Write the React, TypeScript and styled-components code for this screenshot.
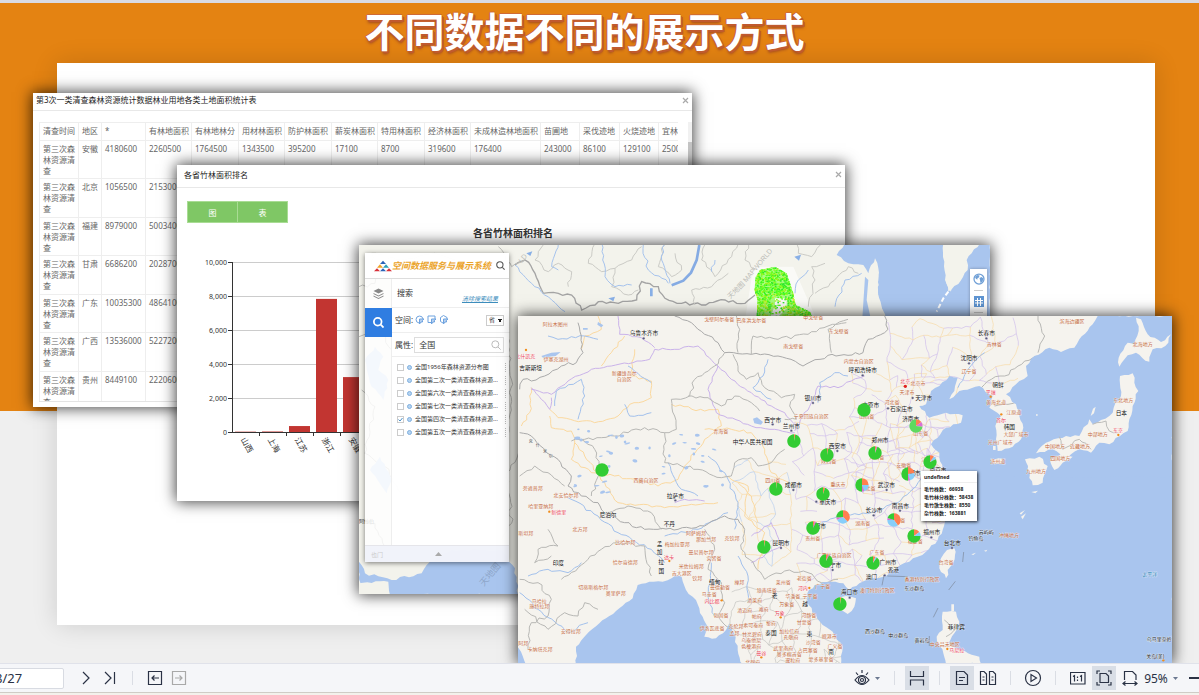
import React from 'react';
import styled, { createGlobalStyle } from 'styled-components';

const GlobalStyle = createGlobalStyle`
  * { box-sizing: border-box; }
  html, body { margin: 0; height: 100%; overflow: hidden; }
  body { font-family: "Noto Sans", "Noto Sans CJK SC", sans-serif; color: #333; }
  #root { height: 100%; }
  button, input, select { font: inherit; color: inherit; margin: 0; }
`;

/* ---------- geometry helpers ---------- */

type Pt = [number, number];

const random = (seed: number) => () => {
  seed = (seed * 1664525 + 1013904223) % 4294967296;
  return seed / 4294967296;
};

/* A jagged line through the given points, for coasts, borders and roads. */
const rough = (pts: Pt[], amp: number, seed: number, closed = false) => {
  const r = random(seed);
  const all = closed ? [...pts, pts[0]] : pts;
  let d = `M${all[0][0]} ${all[0][1]}`;
  for (let i = 1; i < all.length; i++) {
    const [x0, y0] = all[i - 1];
    const [x1, y1] = all[i];
    const len = Math.hypot(x1 - x0, y1 - y0);
    const n = Math.max(1, Math.round(len / 13));
    for (let k = 1; k < n; k++) {
      const t = k / n;
      const off = (r() - 0.5) * 2 * amp;
      const px = x0 + (x1 - x0) * t - ((y1 - y0) / len) * off;
      const py = y0 + (y1 - y0) * t + ((x1 - x0) / len) * off;
      d += `L${px.toFixed(0)} ${py.toFixed(0)}`;
    }
    d += `L${x1} ${y1}`;
  }
  return closed ? d + 'Z' : d;
};

const parse = (s: string): Pt[] => s.split(' ').map(p => p.split(',').map(Number) as Pt);

const mesh = (x0: number, y0: number, x1: number, y1: number, step: number, seed: number) => {
  const r = random(seed);
  const rows: Pt[][] = [];
  for (let y = y0; y <= y1; y += step) {
    const row: Pt[] = [];
    for (let x = x0; x <= x1; x += step) {
      row.push([Math.round(x + (r() - 0.5) * step), Math.round(y + (r() - 0.5) * step)]);
    }
    rows.push(row);
  }
  const out: string[] = [];
  rows.forEach((row, j) =>
    row.forEach((p, i) => {
      if (row[i + 1] && r() > 0.2) out.push(rough([p, row[i + 1]], 3, seed + i * 7 + j));
      if (rows[j + 1] && r() > 0.2) out.push(rough([p, rows[j + 1][i]], 3, seed + i + j * 11));
    })
  );
  return out;
};

/* ---------- slide ---------- */

const Viewer = styled.div`
  display: flex;
  flex-direction: column;
  height: 100vh;
  background: #efefef;
`;

const Slide = styled.main`
  position: relative;
  flex: 1;
  min-height: 0;
  overflow: hidden;
  border-top: 3px solid #d9dbe3;
  background: linear-gradient(#e48312 408px, #efefef 408px);
`;

const SlideTitle = styled.h1`
  margin: 0;
  height: 60px;
  padding-right: 30px;
  text-align: center;
  font-size: 40px;
  line-height: 58px;
  font-weight: 700;
  color: #fff;
  text-shadow: 1px 1px 0 #c05a2e, 2px 2px 0 #c05a2e, -1px 0 0 #c05a2e, 0 -1px 0 #cf6a35, 1px 3px 3px #a04a20;
`;

const Sheet = styled.div`
  height: 562px;
  margin: 0 44px 0 57px;
  background: #fff;
  box-shadow: 0 0 24px rgba(0, 0, 0, 0.14);
`;

const Win = styled.section<{ $x: number; $y: number; $w: number; $h: number }>`
  position: absolute;
  left: ${p => p.$x}px;
  top: ${p => p.$y}px;
  width: ${p => p.$w}px;
  height: ${p => p.$h}px;
  background: #fff;
  box-shadow: 0 0 14px 1px rgba(0, 0, 0, 0.75);
`;

const WinBar = styled.header<{ $h: number; $pad: number }>`
  display: flex;
  align-items: center;
  justify-content: space-between;
  height: ${p => p.$h}px;
  padding: 0 3px 3px ${p => p.$pad}px;
  border-bottom: 1px solid #e8e8e8;
`;

const WinTitle = styled.h2`
  margin: 0;
  font-size: 8px;
  font-weight: 400;
  line-height: 12px;
  color: #222;
`;

const Close = styled.button`
  display: flex;
  padding: 0;
  border: 0;
  background: none;
  color: #aaa;
`;

const CloseButton = () => (
  <Close aria-label="关闭">
    <svg width="7" height="7" viewBox="0 0 7 7" stroke="currentColor" strokeWidth="1.2"><path d="M1 1l5 5M6 1l-5 5" /></svg>
  </Close>
);

/* ---------- table window ---------- */

const TableBody = styled.div`
  display: flex;
  justify-content: space-between;
  height: 291px;
  padding: 11px 0 0 6px;
`;

const TableClip = styled.div`
  width: 639px;
  height: 280px;
  overflow: hidden;
  border-bottom: 1px solid #e4e4e4;
`;

const ScrollTrack = styled.div`
  width: 4px;
  height: 100%;
  padding-top: 20px;
  background: #f1f1f1;
  &::after { content: ''; display: block; height: 90px; background: #c4c4c4; }
`;

const DataTable = styled.table`
  width: 665px;
  height: 288px;
  table-layout: fixed;
  border-collapse: collapse;
  font-size: 8px;
  line-height: 11px;
  color: #666;
  th, td {
    padding: 2px 3px;
    border: 1px solid #eee;
    text-align: left;
    vertical-align: top;
    font-weight: 400;
    overflow: hidden;
  }
  th { height: 18px; white-space: nowrap; }
`;

const columns: [string, number][] = [
  ['清查时间', 39], ['地区', 23], ['*', 44], ['有林地面积', 46], ['有林地林分', 47], ['用材林面积', 46],
  ['防护林面积', 47], ['薪炭林面积', 46], ['特用林面积', 47], ['经济林面积', 46], ['未成林造林地面积', 70],
  ['苗圃地', 39], ['采伐迹地', 40], ['火烧迹地', 39], ['宜林地', 46],
];

const rows: string[][] = [
  ['安徽', '4180600', '2260500', '1764500', '1343500', '395200', '17100', '8700', '319600', '176400', '243000', '86100', '129100', '250000'],
  ['北京', '1056500', '215300'],
  ['福建', '8979000', '5003400'],
  ['甘肃', '6686200', '2028700'],
  ['广东', '10035300', '4864100'],
  ['广西', '13536000', '5227200'],
  ['贵州', '8449100', '2220600'],
];

const TableWindow = () => (
  <Win $x={33} $y={90} $w={659} $h={314}>
    <WinBar $h={18} $pad={3}>
      <WinTitle>第3次一类清查森林资源统计数据林业用地各类土地面积统计表</WinTitle>
      <CloseButton />
    </WinBar>
    <TableBody>
      <TableClip>
        <DataTable>
          <colgroup>{columns.map(([n, w]) => <col key={n} width={w} />)}</colgroup>
          <thead><tr>{columns.map(([n]) => <th key={n} scope="col">{n}</th>)}</tr></thead>
          <tbody>
            {rows.map(r => (
              <tr key={r[0]}>
                <td>第三次森林资源清查</td>
                {columns.slice(1).map(([n], i) => <td key={n}>{r[i]}</td>)}
              </tr>
            ))}
          </tbody>
        </DataTable>
      </TableClip>
      <ScrollTrack />
    </TableBody>
  </Win>
);

/* ---------- chart window ---------- */

const ChartBody = styled.div`
  display: flex;
  flex-direction: column;
  padding: 13px 10px 0;
`;

const Tabs = styled.div`
  display: flex;
`;

const Tab = styled.button`
  width: 51px;
  height: 22px;
  padding: 0;
  border: 1px solid #a9dc94;
  background: #7fc765;
  color: #fff;
  font-size: 8px;
  & + & { margin-left: -1px; }
`;

const ChartTitle = styled.h3`
  margin: 0;
  padding: 2px 0 0 4px;
  text-align: center;
  font-size: 10px;
  line-height: 16px;
  font-weight: 700;
`;

const ChartSvg = styled.svg`
  display: block;
  width: 100%;
  height: 240px;
  font-size: 7px;
  fill: #333;
`;

const bars: [string, number][] = [['山西', 20], ['上海', 30], ['江苏', 350], ['浙江', 7830], ['安徽', 3230], ['福建', 2600]];

const ChartWindow = () => (
  <Win $x={177} $y={162} $w={668} $h={336}>
    <WinBar $h={23} $pad={7}>
      <WinTitle>各省竹林面积排名</WinTitle>
      <CloseButton />
    </WinBar>
    <ChartBody>
      <Tabs><Tab>图</Tab><Tab>表</Tab></Tabs>
      <ChartTitle>各省竹林面积排名</ChartTitle>
      <ChartSvg>
        {[0, 1, 2, 3, 4, 5].map(i => {
          const y = 191 - i * 34;
          return (
            <g key={i}>
              <path d={`M46 ${y}.5H620`} stroke={i ? '#ccc' : '#333'} />
              <path d={`M41 ${y}.5h5`} stroke="#333" />
              <text x="40" y={y + 3} textAnchor="end">{(i * 2000).toLocaleString('en-US')}</text>
            </g>
          );
        })}
        <path d="M45.500 21V192" stroke="#333" />
        {bars.map(([name, v], i) => (
          <g key={name}>
            <rect x={48 + i * 27} y={191 - v * 0.017} width="21" height={v * 0.017} fill="#c23531" />
            <path d={`M${72.5 + i * 27} 192v3`} stroke="#333" />
            <text transform={`translate(${56 + i * 27} 197) rotate(60)`} fontSize="8" y="3">{name}</text>
          </g>
        ))}
      </ChartSvg>
    </ChartBody>
  </Win>
);

/* ---------- forest map window ---------- */

const MapSvg = styled.svg`
  display: block;
  width: 100%;
  height: 100%;
`;

const forest = (() => {
  const r = random(42);
  const out: { x: number; y: number; c: string }[] = [];
  const colors = ['#4bff1a', '#2ee82a', '#9cf51c', '#66ff22', '#c4ef2a', '#3df53a'];
  for (let i = 0; i < 1500; i++) {
    const y = 78 + r() * 155;
    const x = 715 + r() * 180;
    const hole = y > 165 && x > 765 && x < 812 && r() > 0.3;
    if (!hole) out.push({ x: Math.round(x), y: Math.round(y), c: colors[Math.floor(r() * (y > 160 ? 5 : 4))] });
  }
  return out;
})();

const northBorders = [
  '0,75 30,60 60,100 85,160 130,160 170,165 200,210 250,185 310,190 365,180 380,125 430,140 450,175 500,190 560,195 630,180 690,190 720,165',
  '90,0 60,60 100,95 130,70 170,95 160,140', '240,0 220,70 260,95 300,85 350,60 380,20', '300,85 290,140 340,165 370,150',
  '570,0 560,60 600,110 650,50 670,10', '540,195 530,150 590,140 640,100', '450,0 430,80 470,110 500,90 480,40',
  '700,0 690,60 720,90', '840,0 850,40 890,50 920,0', '900,160 940,140 1000,80 1030,100', '880,200 900,120 890,80 930,70',
];
const northRivers = ['130,10 110,80 130,90', '260,10 270,110 300,140 350,135', '380,0 400,90 460,130', '0,75 50,130 110,180 150,215',
  '450,0 440,60 465,130', '600,60 590,95', '840,160 850,120 880,90', '960,200 990,120 1040,100'];

const ForestMap = () => (
  <MapSvg viewBox="0 0 1893 1047" preserveAspectRatio="xMinYMin slice">
    <defs>
      <clipPath id="forest"><path d="M735 90L780 80 815 100 825 130 835 160 842 195 885 215 892 232H725L728 180 718 150 722 110Z" /></clipPath>
    </defs>
    <rect width="1893" height="1047" fill="#f3f3ec" />
    <g transform="translate(468 -15)" fill="none">
      <path fill="#fff" d="M715 80h120l70 160H690Z" opacity=".6" />
      {northBorders.map((s, i) => <path key={s} d={rough(parse(s), 5, 12 + i)} stroke={i ? '#cbcbc6' : '#a4a4a4'} strokeWidth={i ? 3 : 4} />)}
      {northRivers.map((s, i) => <path key={s} d={rough(parse(s), 5, 80 + i)} stroke="#a6c3ec" strokeWidth="3" />)}
      <path d="M553 15L545 60 528 98 505 122 470 136" stroke="#85abe3" strokeWidth="8" />
      <path d={rough(parse('990,10 965,45 1000,70 1045,75 1060,100 1080,55 1090,85 1088,160 1100,200 1112,235 1300,235 1310,160 1290,120 1285,10'), 3, 5, true)} fill="#a9c5ee" />
      <path d={rough(parse('1285,0 1300,155 1350,95 1355,60 1395,15 1395,0'), 4, 6, true)} fill="#f3f3ec" />
      <path d={rough(parse('1395,10 1355,60 1358,90 1305,160 1255,235 1425,235 1425,10'), 3, 7, true)} fill="#a9c5ee" />
      <path d={rough(parse('1070,90 1088,85 1090,170 1110,232 1068,232'), 2, 8, true)} fill="#f3f3ec" />
      <path d="M1050 110l10 10-5 60 12 55h-25z" fill="#a9c5ee" />
      <path d="M1300 155l-15 20-20 40" stroke="#fff" strokeWidth="6" strokeDasharray="14 8" />
      <path d="M280 175l20-5-5 14zM405 145h8v24h-8zM838 50l20-6-6 18zM34 40l18-6-6 14z" fill="#88afe6" />
      <g clipPath="url(#forest)">
        <path fill="#7dff3d" opacity=".65" d="M715 75h120v100h-55v20l-15 40h-55zM815 175l80 40v20h-110l30-30z" />
        {forest.map((p, i) => <rect key={i} x={p.x} y={p.y} width="5" height="4" fill={p.c} />)}
      </g>
      <g fill="#bcbcb7" fontSize="21" fontFamily="Liberation Sans, Noto Sans CJK SC, sans-serif">
        <text transform="translate(694 128) rotate(-50)">MAPWORLD</text>
        <text transform="translate(646 178) rotate(-45)">天地图</text>
        <text transform="translate(20 70) rotate(-50)">LD</text>
      </g>
    </g>
    <g transform="translate(-12 -15)" fill="none">
      {['12,140 60,130 50,40 150,60 240,40 300,60', '12,290 80,280 110,330', '20,450 60,500 30,640 90,680 140,760', '430,20 470,80 510,60', '440,900 470,850 455,700 490,640', '12,840 60,850 90,920', '460,600 470,420 450,200'].map((s, i) => (
        <path key={s} d={rough(parse(s), 6, 30 + i)} stroke="#bcbcb8" strokeWidth="3" />
      ))}
      <path d={rough(parse('30,360 60,320 85,350 70,390 100,420 85,480 50,440'), 4, 3, true)} fill="#c3d6f2" />
      <path d={rough(parse('45,690 75,650 110,720 95,760'), 3, 4, true)} fill="#c3d6f2" />
      <path d={rough(parse('12,965 30,1000 110,1020 200,1000 215,975 290,930 440,930 480,985 490,1065 12,1065'), 4, 9, true)} fill="#a9c5ee" />
      <path d={rough(parse('12,1030 100,1025 105,1065 12,1065'), 3, 10, true)} fill="#f3f3ec" />
      <text transform="translate(386 1040) rotate(-50)" fill="#8ea6c9" fontSize="27">天地图</text>
    </g>
    <text x="0" y="835" fontSize="15" fill="#444">阿拉伯</text>
  </MapSvg>
);

const ForestStage = styled.div`
  position: relative;
  height: 100%;
  overflow: hidden;
`;

const SidePanel = styled.aside`
  position: absolute;
  left: 6px;
  top: 8px;
  display: flex;
  flex-direction: column;
  width: 144px;
  height: 309px;
  background: rgba(255, 255, 255, 0.82);
  box-shadow: 0 1px 5px rgba(0, 0, 0, 0.5);
`;

const PanelHeader = styled.header`
  display: flex;
  align-items: center;
  height: 26px;
  padding: 0 4px 0 9px;
  background: rgba(255, 255, 255, 0.9);
  border-bottom: 1px solid #ddd;
`;

const Brand = styled.strong`
  flex: 1;
  font-size: 9px;
  line-height: 14px;
  font-style: italic;
  font-weight: 700;
  color: #eba42b;
  white-space: nowrap;
`;

const IconButton = styled.button`
  display: flex;
  padding: 0;
  border: 0;
  background: none;
`;

const PanelMain = styled.div`
  flex: 1;
  display: flex;
  min-height: 0;
`;

const Rail = styled.nav`
  display: flex;
  flex-direction: column;
  width: 27px;
  border-right: 1px solid #eee;
`;

const RailButton = styled.button<{ $active?: boolean }>`
  display: flex;
  align-items: center;
  justify-content: center;
  width: 27px;
  height: 29px;
  padding: 0;
  border: 0;
  background: ${p => (p.$active ? '#2f7de1' : 'transparent')};
`;

const PanelContent = styled.div`
  flex: 1;
  display: flex;
  flex-direction: column;
  background: rgba(255, 255, 255, 0.85);
  font-size: 8px;
  line-height: 12px;
`;

const PanelRow = styled.div<{ $h: number; $gap: number }>`
  display: flex;
  align-items: center;
  gap: ${p => p.$gap}px;
  height: ${p => p.$h}px;
  padding: 0 5px 0 3px;
  border-bottom: 1px solid #eee;
`;

const PanelTitle = styled.h2`
  flex: 1;
  margin: 0 0 0 2px;
  font-size: 8px;
  font-weight: 400;
`;

const ClearLink = styled.a`
  align-self: flex-end;
  padding: 0 6px 2px 0;
  font-size: 6px;
  line-height: 12px;
  font-style: italic;
  color: #3c8dbc;
`;

const ShapeSelect = styled.select`
  appearance: none;
  width: 18px;
  height: 11px;
  margin-left: auto;
  padding: 0 2px;
  border: 1px solid #ccc;
  border-radius: 0;
  background:
    linear-gradient(50deg, transparent 50%, #222 50%) 11px 3px / 2px 4px no-repeat,
    linear-gradient(-50deg, transparent 50%, #222 50%) 13px 3px / 2px 4px no-repeat,
    #fff;
  font-size: 6px;
  line-height: 9px;
`;

const SearchBox = styled.div`
  display: flex;
  align-items: center;
  flex: 1;
  height: 16px;
  padding: 0 2px 0 4px;
  border: 1px solid #ddd;
  background: #fff;
`;

const SearchInput = styled.input`
  flex: 1;
  width: 20px;
  padding: 0;
  border: 0;
  background: none;
  font-size: 8px;
`;

const LayerList = styled.ul`
  flex: 1;
  margin: 0;
  padding: 4px 3px 0 5px;
  list-style: none;
`;

const LayerItem = styled.li`
  display: flex;
  align-items: center;
  height: 13px;
  font-size: 6px;
  line-height: 13px;
  white-space: nowrap;
  label { display: flex; align-items: center; gap: 3px; flex: 1; }
`;

const Check = styled.input`
  appearance: none;
  width: 7px;
  height: 7px;
  margin: 0;
  border: 1px solid #ccc;
  background: #fff;
  &:checked { background: url("data:image/svg+xml,%3Csvg xmlns='http://www.w3.org/2000/svg' viewBox='0 0 5 5'%3E%3Cpath d='M.5 2.500l1.500 1.500L4.500 1' fill='none' stroke='%234a90c8'/%3E%3C/svg%3E"); }
`;

const LayerDot = styled.span`
  width: 5px;
  height: 5px;
  border: 1px solid #7fb0e0;
  border-radius: 3px;
  background: #b5d3f0;
`;

const More = styled.span`
  width: 1px;
  height: 9px;
  border-left: 1px dotted #bbb;
`;

const PanelFooter = styled.footer`
  display: flex;
  align-items: center;
  height: 17px;
  padding-left: 6px;
  gap: 52px;
  font-size: 6px;
  color: #ccc;
  background: rgba(240, 242, 250, 0.9);
  border-top: 1px solid #e5e5ea;
`;

const MapTools = styled.div`
  position: absolute;
  right: 3px;
  top: 24px;
  display: flex;
  flex-direction: column;
  align-items: center;
  gap: 5px;
  width: 17px;
  height: 70px;
  padding-top: 4px;
  background: #fff;
  box-shadow: 0 0 3px rgba(0, 0, 0, 0.3);
  hr { width: 9px; margin: 0; border: 0; border-top: 1px solid #ccc; }
`;

const Magnifier = ({ size = 9, color = '#555', w = 1.2 }: { size?: number; color?: string; w?: number }) => (
  <svg width={size} height={size} viewBox="0 0 10 10" fill="none" stroke={color} strokeWidth={w}>
    <circle cx="4.300" cy="4.300" r="3.500" /><path d="M7 7l2.600 2.600" />
  </svg>
);

const ShapeTool = ({ kind }: { kind: string }) => (
  <svg width="10" height="10" viewBox="0 0 20 20" fill="none" stroke="#6fa3df" strokeWidth="2">
    {kind === '矩形' ? <path d="M9 15H2V2h14v7" /> : kind === '圆形' ? <path d="M8 16A7 7 0 1 1 16 8" /> : <path d="M8 16L3 13V5l6-4 7 4v4" />}
    <path d="M9 8h9l-3 3v3h-3l-3 4z" fill="#b5d0f0" />
  </svg>
);

const layers = ['全国1956年森林资源分布图', '全国第二次一类清查森林资源...', '全国第六次一类清查森林资源...', '全国第七次一类清查森林资源...', '全国第四次一类清查森林资源...', '全国第五次一类清查森林资源...'];

const ForestWindow = () => (
  <Win $x={359} $y={242} $w={631} $h={349}>
    <ForestStage>
      <ForestMap />
      <SidePanel>
        <PanelHeader>
          <svg width="18" height="12" viewBox="0 0 54 36">
            <path fill="#2a62b8" d="M27 2l9 10H18z" /><path fill="#f0a32a" d="M18 13l9 10H9z" /><path fill="#2c9fb8" d="M36 13l9 10H27z" />
            <path fill="#d8303a" d="M9 25l9 9H0z" /><path fill="#2a62b8" d="M27 25l9 9H18z" /><path fill="#d8303a" d="M45 25l9 9H36z" />
          </svg>
          <Brand>空间数据服务与展示系统</Brand>
          <IconButton aria-label="搜索"><Magnifier /></IconButton>
        </PanelHeader>
        <PanelMain>
          <Rail>
            <RailButton aria-label="图层">
              <svg width="11" height="11" viewBox="0 0 22 22"><path fill="#888" d="M11 1l10 5-10 5L1 6zM1 10l10 5 10-5v2l-10 5-10-5zM1 15l10 5 10-5v2l-10 5-10-5z" /></svg>
            </RailButton>
            <RailButton $active aria-label="搜索"><Magnifier size={11} color="#fff" w={1.6} /></RailButton>
          </Rail>
          <PanelContent>
            <PanelRow $h={29} $gap={0}>
              <PanelTitle>搜索</PanelTitle>
              <ClearLink href="#clear">清除搜索结果</ClearLink>
            </PanelRow>
            <PanelRow $h={25} $gap={2}>
              <span>空间:</span>
              {['圆形', '矩形', '多边形'].map(k => <IconButton key={k} aria-label={k}><ShapeTool kind={k} /></IconButton>)}
              <ShapeSelect aria-label="行政区"><option>省</option></ShapeSelect>
            </PanelRow>
            <PanelRow $h={24} $gap={1}>
              <label htmlFor="attr">属性:</label>
              <SearchBox>
                <SearchInput id="attr" defaultValue="全国" />
                <Magnifier size={10} color="#bbb" w={1} />
              </SearchBox>
            </PanelRow>
            <LayerList>
              {layers.map((l, i) => (
                <LayerItem key={l}>
                  <label><Check type="checkbox" defaultChecked={i === 4} /><LayerDot />{l}</label>
                  <More />
                </LayerItem>
              ))}
            </LayerList>
          </PanelContent>
        </PanelMain>
        <PanelFooter>
          也门
          <svg width="7" height="4" viewBox="0 0 7 4"><path d="M0 4l3.500-4L7 4z" fill="#aaa" /></svg>
        </PanelFooter>
      </SidePanel>
      <MapTools>
        <IconButton aria-label="全球">
          <svg width="12" height="12" viewBox="0 0 24 24"><circle cx="12" cy="12" r="10" fill="#fff" stroke="#6f9fd6" strokeWidth="2.500" /><path fill="#6f9fd6" d="M4 8l5-4 4 1-1 4-3 1v3l-3-1zM13 10l4-2 4 3-2 6-4 3-1-6z" /></svg>
        </IconButton>
        <hr />
        <IconButton aria-label="表格">
          <svg width="10" height="11" viewBox="0 0 20 22"><path fill="#5f95d2" d="M0 0h20v22H0z" /><path stroke="#fff" strokeWidth="2" d="M2 9h16M2 14h16M7 4v16M13 4v16" /></svg>
        </IconButton>
        <hr />
      </MapTools>
    </ForestStage>
  </Win>
);

/* ---------- bamboo map window ---------- */

type Label = [string, number, number];

const NW = { dx: -6, dy: 0 };
const NE = { dx: 984, dy: 0 };
const SW = { dx: -6, dy: 522 };
const SE = { dx: 984, dy: 522 };

const regions: { at: { dx: number; dy: number }; list: Label[] }[] = [
  { at: NW, list: [['阿拉木图州', 118, 24], ['伊塞克湖州', 120, 130], ['新疆维吾尔', 325, 172], ['自治区', 325, 188], ['戈壁阿尔泰省', 610, 10], ['巴彦洪戈尔省', 706, 12], ['中戈壁省', 892, 4], ['南戈壁省', 832, 89], ['东戈壁省', 968, 44], ['宁夏回族自治区', 886, 300], ['青海省', 614, 345], ['西藏自治区', 390, 493], ['四川省', 770, 491], ['重庆市', 966, 504], ['陕西省', 938, 435], ['旁遮普邦', 50, 517], ['北安恰尔邦', 150, 538]] },
  { at: NE, list: [['滨海边疆区', 678, 16], ['吉林省', 445, 85], ['辽宁省', 369, 165], ['内蒙古自治区', 38, 136], ['北京市', 216, 200], ['天津市', 183, 227], ['河北省', 138, 259], ['黄海北道', 450, 259], ['江原道', 503, 289], ['大邱广域市', 510, 354], ['光州广域市', 463, 377], ['北海地方', 890, 84], ['东北地方', 832, 251], ['中部地方', 755, 355], ['中国地方', 627, 389], ['近畿地方', 702, 391], ['四国地方', 643, 427], ['九州地方', 570, 465], ['济州道', 455, 436], ['山东省', 224, 351], ['山西省', 62, 300], ['安徽省', 173, 448], ['河南省', 92, 424], ['江苏省', 248, 428], ['湖北省', 66, 516]] },
  { at: SW, list: [['哈里亚纳邦', 74, 48], ['北方邦', 192, 118], ['拉贾斯坦邦', 14, 129], ['比哈尔邦', 328, 156], ['恰尔肯德邦', 328, 217], ['切蒂斯格尔邦', 232, 290], ['奥里萨邦', 299, 309], ['马哈拉', 70, 332], ['施特拉邦', 70, 349], ['安得拉邦', 164, 423], ['卡纳塔克邦', 72, 478], ['果阿邦', 14, 459], ['阿萨姆邦', 540, 130], ['那加兰邦', 570, 146], ['梅加拉亚邦', 484, 161], ['曼尼普尔邦', 555, 185], ['克钦邦', 648, 144], ['实皆省', 594, 203], ['米佐拉姆邦', 526, 228], ['吉大港区', 497, 248], ['钦邦', 544, 264], ['掸邦', 670, 275], ['曼德勒省', 612, 292], ['马圭省', 580, 312], ['勃固省', 615, 375], ['伊洛瓦底省', 588, 415], ['克伦邦', 660, 408], ['孟邦', 655, 430], ['清迈府', 686, 360], ['清莱府', 716, 329], ['难府', 743, 358], ['帕府', 722, 378], ['黎府', 765, 400], ['素可泰府', 712, 405], ['甘烹碧府', 708, 432], ['乌泰他尼', 706, 450], ['色梗港府', 706, 468], ['孔敬府', 825, 441], ['加拉信府', 820, 422], ['武里南府', 802, 475], ['奥多棉吉省', 820, 492], ['暹粒府', 830, 510], ['万象省', 812, 343], ['琅南塔省', 752, 299], ['莱州省', 802, 275], ['老街省', 865, 264], ['广宁省', 920, 288], ['华潘省', 830, 318], ['宁平省', 882, 318], ['河静省', 878, 375], ['甘蒙省', 865, 396], ['沙湾省', 892, 456], ['岘港市', 940, 438], ['广义省', 957, 468], ['占巴塞省', 875, 480], ['蒙多基里省', 915, 506], ['贵州省', 890, 143], ['广西壮族自治区', 955, 196], ['北碧府', 710, 517]] },
  { at: SE, list: [['湖南省', 50, 100], ['江西省', 155, 89], ['广东省', 93, 186], ['福建省', 208, 154], ['台湾省', 300, 215], ['冲绳地方', 489, 136], ['香港特别行政区', 228, 266], ['澳门特别行政区', 94, 299], ['中央吕宋地区', 296, 461]] },
];

const cities: { at: { dx: number; dy: number }; list: Label[] }[] = [
  { at: NW, list: [['乌鲁木齐市', 384, 51], ['吉斯斯坦', 44, 155], ['银川市', 891, 245], ['西宁市', 770, 311], ['兰州市', 826, 329], ['中华人民共和国', 710, 378], ['西安市', 964, 390], ['成都市', 832, 507]] },
  { at: NE, list: [['长春市', 421, 51], ['沈阳市', 369, 127], ['呼和浩特市', 50, 161], ['天津市', 233, 247], ['太原市', 74, 268], ['石家庄市', 166, 278], ['济南市', 194, 308], ['郑州市', 102, 373], ['朝鲜', 456, 208], ['韩国', 490, 333], ['日本', 826, 292], ['合肥市', 198, 470], ['南京市', 276, 462], ['武汉市', 121, 508]] },
  { at: SW, list: [['拉萨市', 478, 17], ['尼泊尔', 276, 76], ['不丹', 460, 101], ['印度', 127, 218], ['孟', 431, 163], ['加', 431, 185], ['拉', 435, 216], ['国', 436, 244], ['缅甸', 596, 275], ['昆明市', 795, 158], ['重庆市', 935, 37], ['贵阳市', 904, 108], ['南宁市', 950, 226], ['老', 776, 318], ['越', 867, 341], ['泰国', 765, 428], ['柬', 880, 431], ['南', 945, 487]] },
  { at: SE, list: [['长沙市', 84, 60], ['南昌市', 163, 47], ['福州市', 257, 127], ['台北市', 319, 158], ['广州市', 126, 215], ['香港', 142, 240], ['澳门', 76, 260], ['海口市', 10, 307], ['菲律宾', 331, 410]] },
];

const isles: Label[] = [['苏屿屿', 421, 127], ['钓鱼岛', 390, 144], ['东沙群岛', 205, 294], ['西沙群岛', 87, 423], ['中沙群岛', 157, 435], ['黄岩岛', 228, 451], ['乌马里奈岭', 940, 447], ['关岛(美)', 928, 498]];
const capitals: { at: { dx: number; dy: number }; list: Label[] }[] = [
  { at: NW, list: [['比什凯克', 28, 119]] },
  { at: NE, list: [['北京', 178, 195], ['平壤', 434, 228], ['首尔', 465, 312], ['东京', 816, 343]] },
  { at: SW, list: [['新德里', 128, 67], ['达卡', 459, 200], ['内比都', 588, 332], ['河内', 860, 294], ['万象', 791, 369], ['曼谷', 736, 489]] },
  { at: SE, list: [['马尼拉', 332, 479]] },
];

const dots: Pt[] = [[377, 67], [885, 261], [764, 325], [820, 344], [958, 405], [826, 522], [1405, 67], [1353, 142], [1034, 178], [1184, 246], [1110, 277], [1106, 522], [472, 553], [789, 696], [895, 557], [1067, 598], [1146, 584], [1240, 664], [1302, 696], [1100, 778], [995, 845], [944, 762]];
const orangeDots: Pt[] = [[24, 102], [1418, 242], [1450, 295], [1801, 357], [94, 587], [454, 735], [611, 853], [874, 816], [788, 904], [730, 1024], [1288, 999], [1936, 1033]];

const borders = [
  '180,20 190,60 195,110 175,140 130,150 80,180 40,195 15,190 5,220', '470,0 520,20 560,55 600,80 620,110 700,115 780,120 855,150 930,118 990,118 1035,110 1050,70 1110,40 1100,0',
  '620,110 590,150 560,170 530,190 515,240 460,250 470,300 475,340 440,350 380,335 330,350 250,365 200,370 160,375', '655,0 665,40 660,110',
  '510,240 570,245 610,270 650,240 700,260 725,285', '645,115 660,165 685,190 720,170 740,215 790,245 830,235 815,270 835,310 800,310',
  '440,350 440,440 490,450 540,460 610,485 640,480 650,440 700,425 720,450 760,440 800,400', '5,350 40,360 80,400 120,430 160,480 150,510 190,540 240,560 260,590 320,620 380,640 420,640 480,640 560,630 620,600 660,610 680,640',
  '700,115 705,60 780,70 870,55 930,30 985,20', '5,480 50,450 90,470 140,510', '940,110 930,40 990,10', '680,640 670,700 710,750 740,790 800,765 870,770 910,800 960,790',
  '90,640 120,690 60,700 50,740 100,720', '130,790 200,740 250,700 300,680 380,690 400,780', '240,880 200,860 180,900 140,890 90,940 20,880', '5,790 60,800 100,850 90,900 40,920 30,1000', '560,640 590,700 570,760 610,800 620,860 600,900 640,950',
  '1560,110 1580,60 1560,0', '1390,215 1420,190 1460,180 1500,150 1555,120', '1430,270 1470,265 1500,255', '250,600 330,570 400,590 430,640', '190,370 230,400 250,460 220,540',
];
const purpleRoads = ['40,220 100,235 150,195 220,160 280,150 345,140 395,130 410,100 470,100 540,90 600,150 640,190 700,230 760,270 800,290 840,340', '40,215 70,250 95,280 100,245', '300,0 305,55 370,65 410,95', '600,150 570,220 595,290 700,330 770,340 830,350', '470,560 500,550 560,555', '830,345 880,260 900,210 960,215 1000,195 1040,180', '700,660 760,620 790,690 700,740'];
const orangeRoads = ['240,0 250,40 200,60 190,100', '350,100 340,180 400,195 400,245 335,265 300,300 230,320 120,305 95,280', '95,300 100,335 160,345 170,380 160,430 220,470 290,480 350,490 420,510 480,490 500,450 560,370 610,330 600,280 560,285 460,265', '560,340 640,340 700,350 740,400 760,470 830,510', '170,380 260,500 300,560 440,575 600,560', '620,480 690,510 680,600 740,650 720,760', '40,215 35,290 10,330', '320,60 280,110 250,150', '720,620 700,540 660,500'];
const mapRivers = ['110,270 115,225 190,190 200,240 180,310', '320,265 335,300 400,290', '330,150 400,200', '750,130 735,180 705,215 760,250', '450,440 490,520 540,540', '900,260 905,200 950,170 990,180', '570,420 620,470 660,560 650,640', '150,545 240,600 300,650 400,700 440,740', '440,660 540,640 630,590', '580,740 570,840 590,900', '5,830 60,880 150,950 210,920', '90,60 120,70 200,60 240,70', '660,720 690,780 690,860', '30,780 90,760 150,770 190,740', '870,640 960,600 1060,590 1140,560 1200,500 1240,470', '1320,215 1350,160 1400,110'];

const sea = '#a9c5ee';
const land = '#f5f3ee';
const purple = '#cfbcec';
const orange = '#f7d9a4';

const oceans: { at: { dx: number; dy: number }; s: string }[] = [
  { at: NE, s: '755,0 740,25 700,70 685,95 645,108 610,95 565,120 540,150 545,180 510,205 480,235 510,265 520,300 532,335 525,370 500,392 455,405 450,370 448,330 465,300 430,275 440,240 400,210 340,225 310,250 325,225 335,185 310,180 280,210 255,225 240,265 220,270 250,305 300,290 350,298 345,320 300,335 275,365 255,385 280,410 290,460 305,485 305,600 980,600 980,0' },
  { at: SE, s: '305,-40 303,70 290,120 275,150 240,185 190,215 150,235 120,258 80,265 40,280 10,300 -8,280 -44,275 -94,285 -116,310 -112,345 -78,395 -40,425 -10,470 -15,525 980,525 980,-40' },
  { at: SW, s: '365,285 400,275 440,275 480,255 497,260 510,300 540,330 560,380 575,410 565,440 600,445 630,420 640,400 655,430 665,480 680,525 180,525 180,470 210,435 250,400 310,355 350,325' },
  { at: SW, s: '0,465 15,485 30,525 0,525' },
];
const islands: { at: { dx: number; dy: number }; s: string }[] = [
  { at: NE, s: '870,5 885,10 905,55 945,78 975,55 958,90 920,100 910,137 870,110 845,118 820,152 818,125 845,80 865,85 878,45' },
  { at: NE, s: '822,180 860,172 877,225 860,270 850,310 845,345 822,360 790,385 760,380 735,410 700,400 665,425 620,400 570,412 600,380 660,360 700,360 730,310 740,325 790,300 825,240' },
  { at: NE, s: '537,430 580,422 605,450 590,500 560,508 545,462' },
  { at: NE, s: '612,430 650,408 680,422 650,440 625,462' },
  { at: NE, s: '435,430 470,430 468,442 440,442' },
  { at: SE, s: '303,180 325,175 327,195 300,265 280,235 285,205' },
  { at: SE, s: '290,365 330,365 340,395 325,430 308,460 345,480 400,500 405,522 300,522 292,490 272,440 290,420' },
  { at: SE, s: '-30,325 0,318 30,325 25,350 5,372 -25,360' },
  { at: SE, s: '525,80 540,70 530,88' },
];

const G = '#33cc33', O = '#ff7f50', B = '#87cefa', M = '#da70d6';
const pies: { x: number; y: number; s: [string, number][] }[] = [
  { x: 84, y: 154, s: [[G, 1]] }, { x: 258, y: 173, s: [[O, 0.02], [G, 0.98]] }, { x: 276, y: 125, s: [[O, 0.03], [G, 0.97]] },
  { x: 309, y: 139, s: [[O, 0.03], [G, 0.97]] }, { x: 305, y: 178, s: [[O, 0.05], [G, 0.95]] }, { x: 295, y: 212, s: [[O, 0.04], [M, 0.04], [G, 0.92]] },
  { x: 246, y: 231, s: [[O, 0.03], [G, 0.97]] }, { x: 308, y: 245, s: [[O, 0.05], [M, 0.03], [G, 0.92]] }, { x: 322, y: 288, s: [[O, 0.03], [G, 0.97]] },
  { x: 355, y: 247, s: [[O, 0.06], [B, 0.04], [G, 0.9]] }, { x: 357, y: 137, s: [[O, 0.03], [M, 0.03], [G, 0.94]] }, { x: 346, y: 94, s: [[G, 1]] },
  { x: 398, y: 110, s: [[O, 0.15], [M, 0.12], ['#5fd95f', 0.73]] }, { x: 412, y: 146, s: [[O, 0.1], [B, 0.08], [G, 0.82]] },
  { x: 390, y: 158, s: [[O, 0.23], [B, 0.22], [M, 0.05], [G, 0.5]] }, { x: 344, y: 169, s: [[O, 0.25], [B, 0.2], [M, 0.05], [G, 0.5]] },
  { x: 325, y: 201, s: [[O, 0.38], [B, 0.3], [M, 0.06], [G, 0.26]] }, { x: 376, y: 204, s: [[O, 0.4], [B, 0.35], [M, 0.05], [G, 0.2]] },
  { x: 396, y: 220, s: [[O, 0.15], [B, 0.1], [G, 0.75]] },
];

const slice = (cx: number, cy: number, r: number, from: number, to: number) => {
  const p = (t: number) => `${(cx + r * Math.sin(t * 2 * Math.PI)).toFixed(1)} ${(cy - r * Math.cos(t * 2 * Math.PI)).toFixed(1)}`;
  return `M${cx} ${cy}L${p(from)}A${r} ${r} 0 ${to - from > 0.5 ? 1 : 0} 1 ${p(to)}Z`;
};

const Pie = ({ x, y, s }: { x: number; y: number; s: [string, number][] }) => {
  if (s.length === 1) return <circle cx={x} cy={y} r="20" fill={s[0][0]} />;
  let at = 0;
  return <g>{s.map(([c, f]) => { const d = slice(x, y, 20, at, at + f); at += f; return <path key={c} d={d} fill={c} />; })}</g>;
};

const MapText = styled.text<{ $tone: string; $size: number }>`
  fill: ${p => p.$tone};
  font-size: ${p => p.$size}px;
  text-anchor: middle;
  paint-order: stroke;
  stroke: rgba(255, 255, 255, 0.6);
  stroke-width: 2px;
`;

const Names = ({ sets, tone, size }: { sets: { at: { dx: number; dy: number }; list: Label[] }[]; tone: string; size: number }) => (
  <>
    {sets.map(({ at, list }) => list.map(([t, x, y]) => (
      <MapText key={t + x} $tone={tone} $size={size} x={x + at.dx} y={y + at.dy + 6}>{t}</MapText>
    )))}
  </>
);

const shift = (s: string, at: { dx: number; dy: number }): Pt[] => parse(s).map(([x, y]) => [x + at.dx, y + at.dy]);

const lakes = (() => {
  const r = random(9);
  return Array.from({ length: 44 }, () => [170 + r() * 450, 340 + r() * 190, 7 + r() * 12, 4 + r() * 6, r() * 40 - 20]);
})();

const ChinaMap = () => (
  <MapSvg viewBox="0 0 1962 1041" preserveAspectRatio="xMinYMin slice">
    <rect width="1962" height="1041" fill={land} />
    <g fill="none" strokeWidth="3">
      {mesh(840, 330, 1320, 820, 38, 21).map((d, i) => <path key={i} d={d} stroke={i % 3 === 0 ? orange : purple} strokeWidth="2" />)}
      {mesh(1010, 180, 1330, 520, 34, 33).map((d, i) => <path key={i} d={d} stroke={i % 2 ? orange : purple} strokeWidth="2" />)}
      {mesh(1120, 20, 1500, 220, 46, 57).map((d, i) => <path key={i} d={d} stroke={i % 2 ? orange : purple} strokeWidth="2" />)}
      {mesh(650, 820, 1000, 1060, 38, 71).map((d, i) => <path key={i} d={d} stroke="#c2c2bf" strokeWidth="2" />)}
      {mesh(660, 440, 840, 780, 50, 72).map((d, i) => <path key={i} d={d} stroke={i % 3 ? orange : '#b3ccef'} strokeWidth="2" />)}
      {orangeRoads.map((s, i) => <path key={s} d={rough(parse(s), 4, 100 + i)} stroke="#fbd9a0" />)}
      {purpleRoads.map((s, i) => <path key={s} d={rough(parse(s), 3, 200 + i)} stroke="#cab3ea" />)}
      {mapRivers.map((s, i) => <path key={s} d={rough(parse(s), 4, 300 + i)} stroke="#a3c1ec" />)}
      {borders.map((s, i) => <path key={s} d={rough(parse(s), 5, 400 + i)} stroke={i < 2 || i === 7 ? '#aaa' : '#b8b8b5'} />)}
    </g>
    <g fill={sea}>
      <path d="M70 120l30-10 28-2-15 12-38 5zM705 308l12-4 18 14-6 8-20-4zM240 18l16 10-6 6-12-8zM195 36h14v5h-14z" />
      {lakes.map(([x, y, w, h, a], i) => <ellipse key={i} cx={x} cy={y} rx={w / 2} ry={h / 2} transform={`rotate(${a} ${x} ${y})`} />)}
      {oceans.map(({ at, s }, i) => <path key={i} d={rough(shift(s, at), at === SW && i === 3 ? 0 : 3, 500 + i, true)} />)}
    </g>
    <g fill={land}>
      {islands.map(({ at, s }, i) => <path key={i} d={rough(shift(s, at), 4, 600 + i, true)} />)}
      <path d="M1360 715l14-5-8 7zM1398 704l10-3-4 6zM1505 592l16-10-12 14zM1540 528l20-4-8 8zM1554 295h5v4h-5zM1718 300l10-8 5-20-8 6zM1600 392h6v4h-6zM1300 865h8v20h-8zM1048 950l20-3-10 8zM1425 390h8v12h-8z" />
    </g>
    <g fill="none" stroke="#bdbdba" strokeWidth="3">
      <path d={rough(shift('740,325 780,315 790,345 815,350', NE), 4, 3)} />
      <path d={rough(shift('640,362 650,400 700,370 735,400', NE), 4, 4)} />
      <path d={rough(shift('295,390 325,420 300,440', SE), 4, 5)} />
      <path stroke="#8b9cb5" d="M1337 708l-3 30M1312 796l-20 26M1260 876l-14 28M1234 960v30M1098 778l-6 30M1108 780l60 2" />
    </g>
    {dots.map(([x, y]) => <circle key={`${x}-${y}`} cx={x} cy={y} r="3.500" fill="#555580" stroke="#ccc" />)}
    {orangeDots.map(([x, y]) => <circle key={`${x}-${y}`} cx={x} cy={y} r="3.500" fill="#f08c1a" />)}
    <circle cx="1162" cy="211" r="5" fill="#e02020" />
    <Names sets={regions} tone="#c46a3c" size={15} />
    <Names sets={capitals} tone="#ec4458" size={15} />
    <Names sets={[{ at: SE, list: isles }]} tone="#222" size={15} />
    <Names sets={[{ at: SE, list: [['太平洋', 911, 252]] }]} tone="#1a7fb4" size={15} />
    <Names sets={[{ at: NW, list: [['克', 44, 376], ['什', 65, 386], ['米', 87, 404], ['尔', 104, 420]] }]} tone="#444" size={12} />
    <Names sets={cities} tone="#111" size={17} />
    {pies.map((p, i) => <Pie key={i} x={p.x * 3} y={p.y * 3} s={p.s} />)}
  </MapSvg>
);

const ChinaStage = styled.div`
  position: relative;
  height: 100%;
`;

const Tooltip = styled.div`
  position: absolute;
  left: 403px;
  top: 155px;
  width: 56px;
  height: 50px;
  padding: 3px 0 0 3px;
  background: #fff;
  box-shadow: 1px 1px 3px rgba(0, 0, 0, 0.8);
  font-size: 5px;
  line-height: 8px;
  font-weight: 700;
  color: #222;
  white-space: nowrap;
  p { margin: 0; }
  p:first-child { height: 9px; margin-bottom: 2px; border-bottom: 1px solid #eee; line-height: 6px; }
`;

const ChinaWindow = () => (
  <Win $x={518} $y={313} $w={654} $h={347}>
    <ChinaStage>
      <ChinaMap />
      <Tooltip role="tooltip">
        <p>undefined</p>
        <p>毛竹株数：66938</p>
        <p>毛竹林分株数：58438</p>
        <p>毛竹散生株数：8550</p>
        <p>杂竹株数：163881</p>
      </Tooltip>
    </ChinaStage>
  </Win>
);

/* ---------- viewer toolbar ---------- */

const Toolbar = styled.footer`
  display: flex;
  align-items: center;
  height: 32px;
  padding-bottom: 3px;
  border-top: 1px solid #e0e2ea;
  background: linear-gradient(#f5f6f9 28px, #cfccc6 28px 29px, #f3f1ec 29px);
  color: #2a3245;
`;

const PageInput = styled.input`
  width: 74px;
  height: 21px;
  margin: 0 10px 0 -10px;
  padding: 0 0 0 4px;
  border: 1px solid #d8dbe2;
  border-radius: 2px;
  background: #fff;
  font-size: 13px;
`;

const Tool = styled.button<{ $on?: boolean; $w?: number; $dim?: boolean }>`
  display: flex;
  align-items: center;
  justify-content: center;
  gap: 5px;
  flex: none;
  width: ${p => p.$w ?? 24}px;
  height: 24px;
  padding: 0;
  border: 0;
  background: ${p => (p.$on ? '#d9dee6' : 'transparent')};
  color: ${p => (p.$dim ? '#a9a9a9' : '#2a3245')};
  font-size: 12px;
  button + & { margin-left: ${p => (p.$w ? 0 : 2)}px; }
  svg { flex: none; fill: none; stroke: currentColor; stroke-width: 1.200; }
`;

const Sep = styled.span`
  flex: none;
  width: 1px;
  height: 14px;
  margin: 0 10px;
  background: #dadde4;
`;

const Spacer = styled.span`
  flex: 1;
`;

const Caret = () => <svg width="5" height="3" viewBox="0 0 5 3"><path d="M0 0h5L2.500 3z" fill="#6b7890" stroke="none" /></svg>;

const ViewerToolbar = () => (
  <Toolbar>
    <PageInput aria-label="页码" defaultValue="8/27" />
    <Tool aria-label="下一页"><svg width="16" height="16"><path d="M5 2l6 6-6 6" /></svg></Tool>
    <Tool $w={24} aria-label="最后一页"><svg width="16" height="16"><path d="M3 2l6 6-6 6M12.500 2v12" /></svg></Tool>
    <Sep />
    <Tool aria-label="后退"><svg width="16" height="16"><path d="M1.500 1.500h13v13h-13zM5 8h7M7.500 5.500L5 8l2.500 2.500" /></svg></Tool>
    <Tool $w={24} $dim aria-label="前进"><svg width="16" height="16"><path d="M1.500 1.500h13v13h-13zM4 8h7M8.500 5.500L11 8l-2.500 2.500" /></svg></Tool>
    <Spacer />
    <Tool $w={34} aria-label="视图">
      <svg width="16" height="18" viewBox="0 0 16 18"><path d="M1 11q7-9 14 0-7 9-14 0zM8 1v3M2 3.500L4 6M14 3.500L12 6" /><circle cx="8" cy="11" r="3.500" /><circle cx="8" cy="11" r="1.500" /></svg>
      <Caret />
    </Tool>
    <Sep />
    <Tool $on aria-label="连续滚动"><svg width="16" height="16"><path d="M1.500 1v5.500h13V1M1.500 15.500V10h13v5.500" /></svg></Tool>
    <Sep />
    <Tool $on aria-label="单页"><svg width="14" height="16"><path d="M1.500 1.500h7.500l3.500 3.500v9.500h-11zM4 7.500h6M4 10.500h4" /></svg></Tool>
    <Tool aria-label="双页"><svg width="18" height="16"><path d="M1.500 1.500H5L7.500 4v10.500h-6zM3.500 7h2M3.500 10h2M10.500 1.500H14L16.500 4v10.500h-6zM12.500 7h2M12.500 10h2" /></svg></Tool>
    <Sep />
    <Tool aria-label="播放"><svg width="18" height="18"><circle cx="9" cy="9" r="7.500" /><path d="M7 5.500v7L12.500 9z" /></svg></Tool>
    <Sep />
    <Tool aria-label="实际大小"><svg width="16" height="14"><path d="M.5 1.500h14.500v11.500H.5zM3 5.500l1.500-1v6M10 5.500l1.500-1v6M7.500 5.500v1.500M7.500 8.500V10" /></svg></Tool>
    <Tool $on aria-label="适合页面"><svg width="16" height="16"><path d="M4 3.500h6l2.500 2.500v6.500H4zM1 4V1h3M12 1h3v3M15 12v3h-3M4 15H1v-3" /></svg></Tool>
    <Tool aria-label="适合宽度"><svg width="16" height="16"><path d="M2.500 10V1.500h8L14 5v5M1 13.500h14M3.500 11.500l-2.500 2 2.500 2M12.500 11.500l2.500 2-2.500 2" /></svg></Tool>
    <Tool $w={38}>95%<Caret /></Tool>
    <Tool $w={19} aria-label="缩小"><svg width="19" height="4"><path d="M9 2h10" strokeWidth="2" /></svg></Tool>
  </Toolbar>
);

export default function App() {
  return (
    <Viewer>
      <GlobalStyle />
      <Slide>
        <SlideTitle>不同数据不同的展示方式</SlideTitle>
        <Sheet />
        <TableWindow />
        <ChartWindow />
        <ForestWindow />
        <ChinaWindow />
      </Slide>
      <ViewerToolbar />
    </Viewer>
  );
}
